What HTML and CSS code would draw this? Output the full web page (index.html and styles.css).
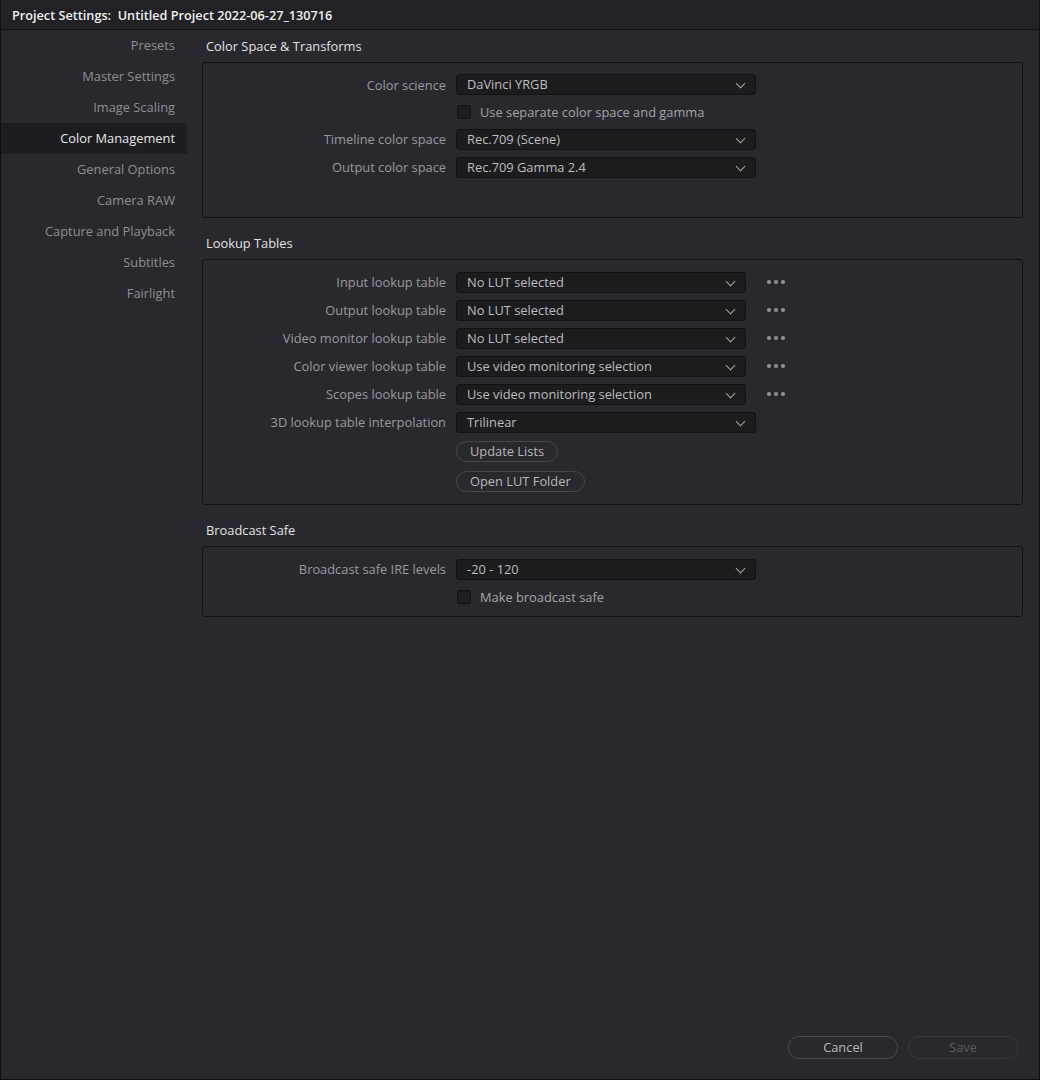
FILE: index.html
```html
<!DOCTYPE html>
<html>
<head>
<meta charset="UTF-8">
<title>Project Settings</title>
<link rel="stylesheet" href="styles.css">
</head>
<body>
<div class="window">
  <div class="titlebar">Project Settings:&nbsp; Untitled Project 2022-06-27_130716</div>
  <div class="content">
    <ul class="sidebar">
      <li>Presets</li>
      <li>Master Settings</li>
      <li>Image Scaling</li>
      <li class="active">Color Management</li>
      <li>General Options</li>
      <li>Camera RAW</li>
      <li>Capture and Playback</li>
      <li>Subtitles</li>
      <li>Fairlight</li>
    </ul>
    <div class="main">
      <h2>Color Space &amp; Transforms</h2>
      <div class="box box-cst">
        <div class="row">
          <span class="label">Color science</span>
          <div class="select">DaVinci YRGB<span class="chev"></span></div>
        </div>
        <div class="row">
          <span class="label"></span>
          <span class="check"></span><span class="check-text">Use separate color space and gamma</span>
        </div>
        <div class="row tall">
          <span class="label">Timeline color space</span>
          <div class="select">Rec.709 (Scene)<span class="chev"></span></div>
        </div>
        <div class="row tall">
          <span class="label">Output color space</span>
          <div class="select">Rec.709 Gamma 2.4<span class="chev"></span></div>
        </div>
      </div>

      <h2 class="next">Lookup Tables</h2>
      <div class="box box-lut">
        <div class="row tall">
          <span class="label">Input lookup table</span>
          <div class="select short">No LUT selected<span class="chev"></span></div>
          <span class="dots"><i></i><i></i><i></i></span>
        </div>
        <div class="row tall">
          <span class="label">Output lookup table</span>
          <div class="select short">No LUT selected<span class="chev"></span></div>
          <span class="dots"><i></i><i></i><i></i></span>
        </div>
        <div class="row tall">
          <span class="label">Video monitor lookup table</span>
          <div class="select short">No LUT selected<span class="chev"></span></div>
          <span class="dots"><i></i><i></i><i></i></span>
        </div>
        <div class="row tall">
          <span class="label">Color viewer lookup table</span>
          <div class="select short">Use video monitoring selection<span class="chev"></span></div>
          <span class="dots"><i></i><i></i><i></i></span>
        </div>
        <div class="row tall">
          <span class="label">Scopes lookup table</span>
          <div class="select short">Use video monitoring selection<span class="chev"></span></div>
          <span class="dots"><i></i><i></i><i></i></span>
        </div>
        <div class="row tall">
          <span class="label">3D lookup table interpolation</span>
          <div class="select">Trilinear<span class="chev"></span></div>
        </div>
        <div class="row btn-row">
          <span class="label"></span>
          <span class="pill">Update Lists</span>
        </div>
        <div class="row btn-row">
          <span class="label"></span>
          <span class="pill">Open LUT Folder</span>
        </div>
      </div>

      <h2 class="next">Broadcast Safe</h2>
      <div class="box box-bs">
        <div class="row tall">
          <span class="label">Broadcast safe IRE levels</span>
          <div class="select">-20 - 120<span class="chev"></span></div>
        </div>
        <div class="row">
          <span class="label"></span>
          <span class="check"></span><span class="check-text">Make broadcast safe</span>
        </div>
      </div>

      <div class="footer">
        <span class="pill wide">Cancel</span>
        <span class="pill wide disabled">Save</span>
      </div>
    </div>
  </div>
</div>
</body>
</html>
```

FILE: styles.css
```css
html, body {
	margin: 0;
	padding: 0;
	background-color: #28282e;
}

body {
	font-family: "Open Sans", "Liberation Sans", Arial, sans-serif;
	font-size: 12.85px;
	color: #a3a3a6;
}

.window {
	width: 1040px;
	height: 1080px;
	box-sizing: border-box;
	border: 1px solid #0e0e11;
	border-top: none;
	display: flex;
	flex-direction: column;
}

.titlebar {
	height: 29px;
	line-height: 30px;
	padding-left: 11px;
	background-color: #212126;
	border-bottom: 1px solid #111114;
	color: #f0f0f0;
	font-weight: 600;
	font-size: 12.7px;
}

.content {
	flex: 1;
	display: flex;
}

/* left list */
.sidebar {
	list-style: none;
	margin: 0;
	padding: 0;
	width: 186px;
}

.sidebar li {
	height: 31px;
	line-height: 31px;
	text-align: right;
	padding-right: 12px;
	color: #8f8f93;
}

.sidebar li.active {
	background-color: #1d1d21;
	color: #e6e6e6;
}

/* right side */
.main {
	flex: 1;
	display: flex;
	flex-direction: column;
	padding: 0 16px 0 15px;
}

h2 {
	margin: 0;
	height: 32px;
	line-height: 32px;
	padding-left: 4px;
	font-size: 12.85px;
	font-weight: normal;
	color: #e2e2e2;
}

h2.next {
	margin-top: 9px;
}

.box {
	border: 1px solid #111114;
	border-radius: 3px;
	padding: 8px 0;
}

.box-cst {
	padding-bottom: 36px;
}

.box-bs {
	padding-bottom: 6px;
}

.row {
	display: flex;
	align-items: center;
	height: 27px;
}

.row.tall {
	height: 28px;
}

.row.btn-row {
	height: 30px;
}

.label {
	width: 243px;
	flex: none;
	text-align: right;
	margin-right: 10px;
	color: #9a9a9e;
	white-space: nowrap;
}

.select {
	position: relative;
	box-sizing: border-box;
	width: 300px;
	height: 21px;
	line-height: 19px;
	padding-left: 10px;
	background-color: #1c1c1f;
	border: 1px solid #121214;
	border-radius: 3px;
	color: #bdbdbf;
}

.select.short {
	width: 290px;
}

.chev {
	position: absolute;
	right: 11px;
	top: 5px;
	width: 6px;
	height: 6px;
	border-right: 1.5px solid #a6a6a8;
	border-bottom: 1.5px solid #a6a6a8;
	transform: rotate(45deg);
}

.dots {
	display: flex;
	gap: 3.5px;
	margin-left: 21px;
}

.dots i {
	width: 3.5px;
	height: 3.5px;
	border-radius: 50%;
	background-color: #8e8e92;
}

.check {
	box-sizing: border-box;
	width: 14px;
	height: 14px;
	margin-left: 1px;
	background-color: #1e1e22;
	border: 1px solid #111114;
	border-radius: 2px;
}

.check-text {
	margin-left: 9px;
	color: #a5a5a8;
}

.pill {
	box-sizing: border-box;
	height: 21px;
	line-height: 19px;
	padding: 0 13px;
	border: 1px solid #46464c;
	border-radius: 11px;
	color: #b8b8ba;
}

.footer {
	margin-top: auto;
	display: flex;
	justify-content: flex-end;
	gap: 10px;
	padding-bottom: 20px;
	margin-right: 5px;
}

.pill.wide {
	width: 110px;
	height: 23px;
	line-height: 21px;
	text-align: center;
	padding: 0;
}

.pill.disabled {
	border-color: #36363b;
	color: #5c5c60;
}
```
